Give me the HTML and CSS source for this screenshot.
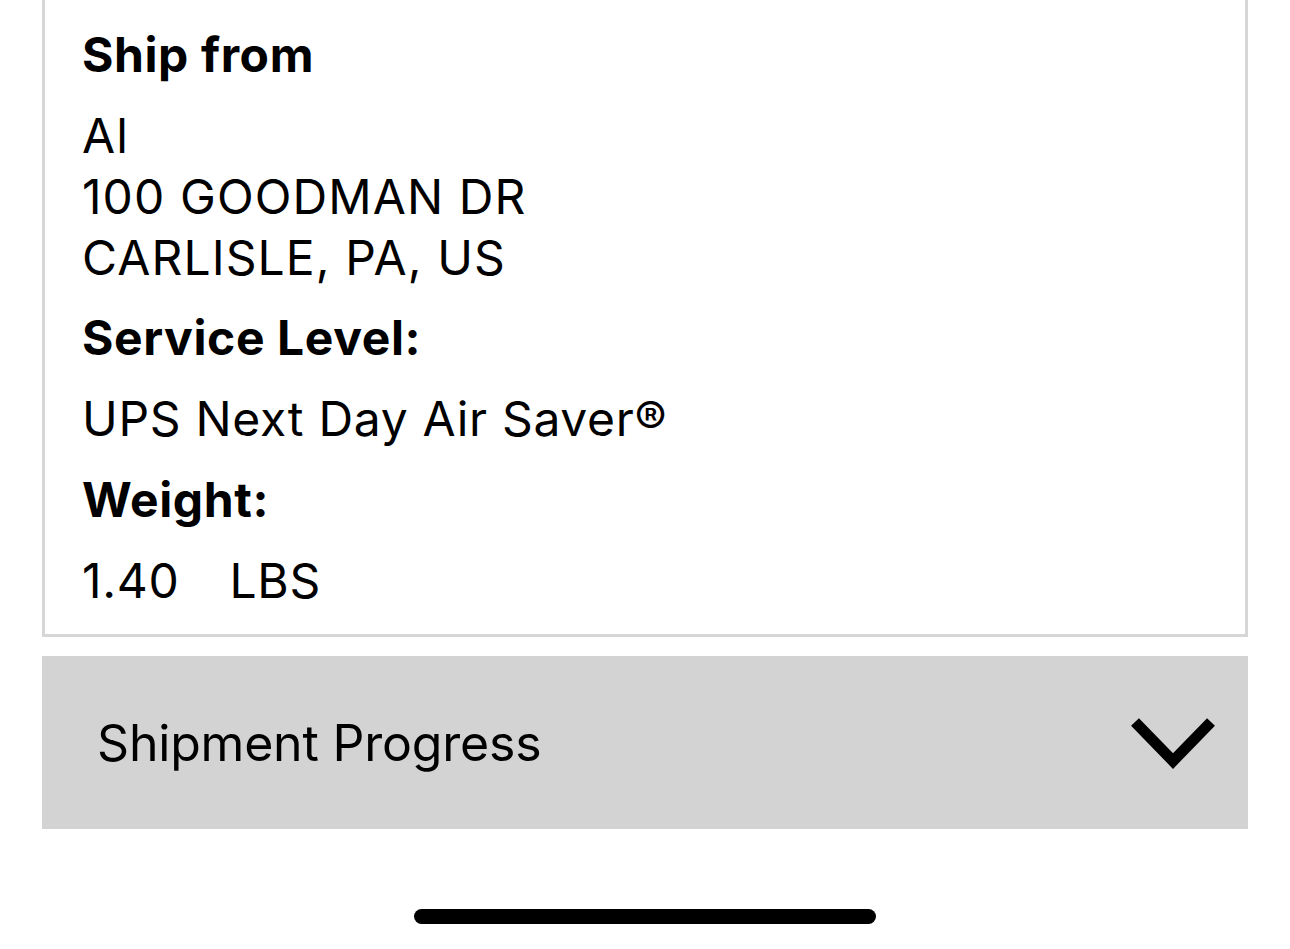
FILE: index.html
```html
<!DOCTYPE html>
<html lang="en">
<head>
  <meta charset="UTF-8" />
  <title>Shipment Details</title>
  <meta name="viewport" content="width=device-width, initial-scale=1.0">
  <link rel="stylesheet" href="styles.css">
</head>
<body>
  <div class="screen">
    <div class="card">
      <div class="label first">Ship from</div>
      <div class="address">
        Al<br>
        100 GOODMAN DR<br>
        CARLISLE, PA, US
      </div>
      <div class="label">Service Level:</div>
      <div class="value">UPS Next Day Air Saver®</div>
      <div class="label">Weight:</div>
      <div class="value"><span class="weight">1.40</span>LBS</div>
    </div>

    <div class="accordion">
      <span class="accordion-title">Shipment Progress</span>
      <svg class="chevron" width="86" height="53" viewBox="0 0 86 53">
        <polyline points="5,6 43,45 81,6" fill="none" stroke="#000" stroke-width="11" />
      </svg>
    </div>

    <div class="home-indicator"></div>
  </div>
</body>
</html>
```

FILE: styles.css
```css
body {
  margin: 0;
  background: #fff;
  font-family: Inter, "Liberation Sans", sans-serif;
  color: #000;
}
.screen {
  padding: 0 42px;
  height: 949px;
  overflow: hidden;
}
.card {
  margin-top: -30px;
  border: 3px solid #d6d6d6;
  padding: 51px 37px 22px;
  font-size: 48px;
  line-height: 62px;
  letter-spacing: 0.7px;
}
.label {
  font-weight: 700;
  margin-top: 19px;
  letter-spacing: 0.6px;
}
.label.first {
  margin-top: 0;
}
.address {
  margin-top: 19px;
  line-height: 61px;
  letter-spacing: 1.1px;
}
.value {
  margin-top: 19px;
}
.weight {
  margin-right: 50px;
}
.accordion {
  margin-top: 19px;
  height: 173px;
  background: #d3d3d3;
  display: flex;
  align-items: center;
  justify-content: space-between;
  padding: 0 32px 0 55px;
}
.accordion-title {
  font-size: 50px;
  letter-spacing: -0.2px;
}
.home-indicator {
  width: 462px;
  height: 15px;
  border-radius: 8px;
  background: #000;
  margin: 80px auto 0;
}
```
